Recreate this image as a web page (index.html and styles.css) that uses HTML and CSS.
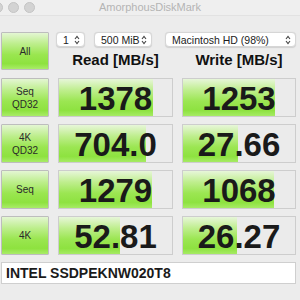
FILE: index.html
```html
<!DOCTYPE html>
<html lang="en">
<head>
<meta charset="UTF-8" />
<meta name="viewport" content="width=device-width, initial-scale=1.0" />
<title>AmorphousDiskMark</title>
<link rel="stylesheet" href="styles.css">
</head>
<body>

<div class="window">
  <!-- Barra de título -->
  <div class="titlebar">
    <div class="lights">
      <span class="light"></span>
      <span class="light"></span>
      <span class="light"></span>
    </div>
    <div class="title">AmorphousDiskMark</div>
  </div>

  <!-- Controles y cabeceras -->
  <div class="top">
    <button class="btn btn-all">All</button>
    <div class="controls">
      <div class="select sel-count">
        <span>1</span>
        <svg class="chev" viewBox="0 0 6 10" width="6" height="10"><path d="M1 4 L3 1.5 L5 4 M1 6 L3 8.5 L5 6" fill="none" stroke="#444" stroke-width="1.1"/></svg>
      </div>
      <div class="select sel-size">
        <span>500 MiB</span>
        <svg class="chev" viewBox="0 0 6 10" width="6" height="10"><path d="M1 4 L3 1.5 L5 4 M1 6 L3 8.5 L5 6" fill="none" stroke="#444" stroke-width="1.1"/></svg>
      </div>
      <div class="select sel-disk">
        <span>Macintosh HD (98%)</span>
        <svg class="chev" viewBox="0 0 6 10" width="6" height="10"><path d="M1 4 L3 1.5 L5 4 M1 6 L3 8.5 L5 6" fill="none" stroke="#444" stroke-width="1.1"/></svg>
      </div>
    </div>
    <div class="head">Read [MB/s]</div>
    <div class="head">Write [MB/s]</div>
  </div>

  <!-- Resultados -->
  <div class="results">
    <button class="btn">Seq<br>QD32</button>
    <div class="value"><div class="fill" style="width:83%"></div><span>1378</span></div>
    <div class="value"><div class="fill" style="width:82%"></div><span>1253</span></div>

    <button class="btn">4K<br>QD32</button>
    <div class="value"><div class="fill" style="width:77%"></div><span>704.0</span></div>
    <div class="value"><div class="fill" style="width:49%"></div><span>27.66</span></div>

    <button class="btn">Seq</button>
    <div class="value"><div class="fill" style="width:82%"></div><span>1279</span></div>
    <div class="value"><div class="fill" style="width:81%"></div><span>1068</span></div>

    <button class="btn">4K</button>
    <div class="value"><div class="fill" style="width:54%"></div><span>52.81</span></div>
    <div class="value"><div class="fill" style="width:48%"></div><span>26.27</span></div>
  </div>

  <div class="drive">INTEL SSDPEKNW020T8</div>
</div>

</body>
</html>
```

FILE: styles.css
```css
body {
  margin: 0;
  background-color: #ececec;
  font-family: "Liberation Sans", Arial, sans-serif;
  color: #1c1c1c;
}

.window {
  width: 300px;
  height: 300px;
  overflow: hidden;
}

.titlebar {
  position: relative;
  height: 15px;
  background-color: #efefef;
  border-bottom: 1px solid #e2e2e2;
  display: flex;
  align-items: center;
  justify-content: center;
}

.lights {
  position: absolute;
  left: -8px;
  top: 2px;
  display: flex;
  gap: 5px;
}

.light {
  width: 9px;
  height: 9px;
  border-radius: 50%;
  background-color: #d3d3d3;
  border: 0.5px solid #c4c4c4;
}

.title {
  font-size: 11px;
  color: #b4b4b4;
  margin-top: -1px;
}

.top {
  display: grid;
  grid-template-columns: 48px 115px 114px;
  grid-template-rows: 15px 23px;
  column-gap: 9px;
  margin-top: 16px;
  margin-left: 1px;
}

.btn {
  font-family: "Liberation Sans", Arial, sans-serif;
  font-size: 10px;
  line-height: 13px;
  color: #2a2a2a;
  padding: 0;
  margin: 0;
  border: 1px solid #bdbdbd;
  border-radius: 1px;
  background: linear-gradient(#e4f6d3 0%, #bdee8c 30%, #9ae650 60%, #8ee23f 85%, #a9ec68 100%);
}

.btn-all {
  grid-row: 1 / 3;
}

.controls {
  grid-column: 2 / 4;
  display: flex;
  margin-left: -2px;
}

.select {
  height: 15px;
  box-sizing: border-box;
  background: white;
  border: 1px solid #d6d6d6;
  border-radius: 4px;
  box-shadow: 0 0.5px 1px rgba(0,0,0,0.12);
  font-size: 10.5px;
  display: flex;
  align-items: center;
  justify-content: space-between;
  padding: 0 4px 0 6px;
}

.sel-count {
  width: 29px;
}

.sel-size {
  width: 58px;
  margin-left: 9px;
}

.sel-disk {
  width: 131px;
  margin-left: 13px;
}

.head {
  font-size: 15px;
  font-weight: bold;
  text-align: center;
  align-self: center;
  padding-top: 2px;
  color: #111;
}

.results {
  display: grid;
  grid-template-columns: 48px 115px 114px;
  grid-auto-rows: 39px;
  column-gap: 9px;
  row-gap: 7px;
  margin-top: 8px;
  margin-left: 1px;
}

.value {
  position: relative;
  box-sizing: border-box;
  border: 1px solid #cdcdcd;
  background-color: #ebebeb;
  display: flex;
  align-items: center;
  justify-content: center;
}

.fill {
  position: absolute;
  left: 0;
  top: 0;
  bottom: 0;
  background: linear-gradient(#e7f6d9 0%, #bfee8e 30%, #9be652 60%, #8ee240 85%, #a6eb64 100%);
}

.value span {
  position: relative;
  font-size: 33px;
  font-weight: bold;
  line-height: 39px;
  padding-top: 1px;
  color: #1a1a1a;
}

.drive {
  margin: 7px 4px 0 1px;
  height: 22px;
  box-sizing: border-box;
  background: white;
  border: 1px solid #cfcfcf;
  font-size: 14px;
  font-weight: bold;
  line-height: 20px;
  padding-left: 4px;
  color: #1a1a1a;
}
```
